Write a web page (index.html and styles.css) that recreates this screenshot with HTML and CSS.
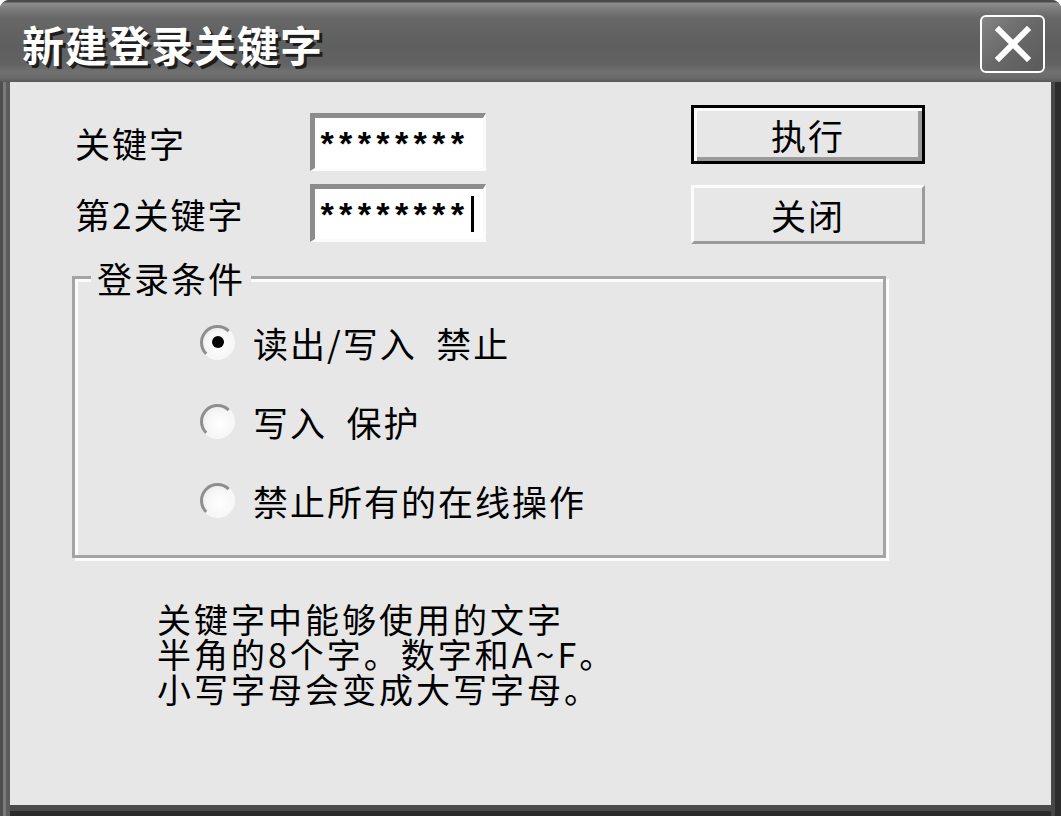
FILE: index.html
```html
<!DOCTYPE html>
<html lang="zh-CN">
<head>
<meta charset="utf-8">
<title>新建登录关键字</title>
<link rel="stylesheet" href="styles.css">
</head>
<body>
<div class="window">
  <div class="titlebar">
    <span class="title">新建登录关键字</span>
    <div class="close" aria-label="关闭">
      <svg width="36" height="36" viewBox="0 0 36 36">
        <path d="M4 4 L32 32 M32 4 L4 32" stroke="#ffffff" stroke-width="6" stroke-linecap="square" fill="none"/>
      </svg>
    </div>
  </div>
  <div class="frame">
    <div class="client">
      <div class="top">
        <div class="fields">
          <div class="field-row">
            <span class="label">关键字</span>
            <div class="input">********</div>
          </div>
          <div class="field-row">
            <span class="label">第2关键字</span>
            <div class="input">********<span class="caret"></span></div>
          </div>
        </div>
        <div class="buttons">
          <div class="btn btn-default">执行</div>
          <div class="btn">关闭</div>
        </div>
      </div>
      <fieldset class="group">
        <legend class="group-title">登录条件</legend>
        <div class="options">
          <div class="option"><span class="radio checked"></span><span class="option-text">读出/写入&ensp;禁止</span></div>
          <div class="option"><span class="radio"></span><span class="option-text">写入&ensp;保护</span></div>
          <div class="option"><span class="radio"></span><span class="option-text">禁止所有的在线操作</span></div>
        </div>
      </fieldset>
      <div class="info">
        <div class="info-line">关键字中能够使用的文字</div>
        <div class="info-line">半角的8个字。数字和A~F。</div>
        <div class="info-line">小写字母会变成大写字母。</div>
      </div>
    </div>
  </div>
</div>
</body>
</html>
```

FILE: styles.css
```css
* { box-sizing: border-box; }

html, body {
  margin: 0;
  padding: 0;
  background: #ffffff;
}

body {
  font-family: "Noto Sans CJK SC", "Noto Sans", sans-serif;
  color: #000;
}

.window {
  width: 1061px;
  height: 816px;
  display: flex;
  flex-direction: column;
  border-radius: 9px 9px 0 0;
  overflow: hidden;
  background: #4c4c4c;
}

.titlebar {
  height: 82px;
  flex: none;
  display: flex;
  align-items: center;
  justify-content: space-between;
  padding: 6px 16px 0 22px;
  background: linear-gradient(to bottom,
    #4a4a4a 0px, #4a4a4a 2px,
    #8e8e8e 3px, #7c7c7c 9px,
    #676767 18px, #5f5f5f 45px,
    #626262 64px, #717171 72px,
    #6a6a6a 78px, #585858 82px);
}

.title {
  color: #ffffff;
  font-size: 42px;
  font-weight: 700;
  letter-spacing: 1px;
  line-height: 48px;
  text-shadow: 3px 3px 0 #1e1e1e;
}

.close {
  width: 65px;
  height: 58px;
  border: 2px solid #ffffff;
  border-radius: 6px;
  background: linear-gradient(135deg, #858585 0%, #6a6a6a 45%, #5a5a5a 100%);
  display: flex;
  align-items: center;
  justify-content: center;
}

.frame {
  flex: 1;
  display: flex;
  padding: 0 10px 11px 10px;
  background:
    linear-gradient(to right, #4e4e4e 0 3px, #7a7a7a 3px 6px, #5c5c5c 6px 10px, transparent 10px),
    linear-gradient(to left, #2c2c2c 0 6px, #474747 6px 10px, transparent 10px),
    linear-gradient(to top, #2a2a2a 0 5px, #4a4a4a 5px 11px, transparent 11px);
}

.client {
  flex: 1;
  background: #e7e7e7;
  padding: 23px 0 0 0;
  font-size: 35px;
  letter-spacing: 2px;
  line-height: 37px;
}

.top {
  display: flex;
  align-items: flex-start;
  padding-left: 65px;
}

.fields {
  margin-top: 8px;
  display: flex;
  flex-direction: column;
  gap: 13px;
}

.field-row {
  display: flex;
  align-items: center;
}

.label {
  width: 235px;
}

.input {
  width: 176px;
  height: 58px;
  background: #ffffff;
  border-style: solid;
  border-width: 5px 3px 3px 5px;
  border-color: #8c8c8c #fbfbfb #fbfbfb #8c8c8c;
  padding: 8px 0 0 2px;
  display: flex;
  align-items: center;
  font-family: "Liberation Mono", "DejaVu Sans Mono", monospace;
  font-size: 34px;
  font-weight: 700;
  line-height: 34px;
  letter-spacing: -1.8px;
}

.caret {
  display: inline-block;
  width: 3px;
  height: 36px;
  background: #000;
  margin-left: 5px;
  margin-top: -8px;
}

.buttons {
  margin-left: 205px;
  display: flex;
  flex-direction: column;
  gap: 21px;
}

.btn {
  width: 234px;
  height: 59px;
  display: flex;
  align-items: center;
  justify-content: center;
  background: #e7e7e7;
  border-style: solid;
  border-width: 3px;
  border-color: #fbfbfb #9a9a9a #9a9a9a #fbfbfb;
}

.btn-default {
  border: 3px solid #000;
  box-shadow: inset 3px 3px 0 #fbfbfb, inset -4px -4px 0 #9a9a9a;
}

.group {
  margin: 15px 0 0 62px;
  width: 814px;
  padding: 0;
  border: 3px solid #a4a4a4;
  box-shadow: inset 3px 3px 0 #fbfbfb, 3px 3px 0 #fbfbfb;
  min-inline-size: 0;
}

.group-title {
  margin-left: 16px;
  padding: 0 6px;
  background: #e7e7e7;
  line-height: 37px;
}

.options {
  padding: 26px 0 35px 125px;
  display: flex;
  flex-direction: column;
  gap: 39px;
}

.option {
  height: 40px;
  display: flex;
  align-items: center;
}

.radio {
  position: relative;
  width: 35px;
  height: 35px;
  border-radius: 50%;
  border: 3px solid;
  border-color: #8e8e8e #f7f7f7 #f7f7f7 #8e8e8e;
  background: radial-gradient(circle at 60% 60%, #ffffff 0%, #f6f6f6 55%, #e2e2e2 100%);
  margin-right: 18px;
  flex: none;
}

.radio.checked::after {
  content: "";
  position: absolute;
  left: 50%;
  top: 50%;
  width: 12px;
  height: 12px;
  margin: -6px 0 0 -6px;
  border-radius: 50%;
  background: #000;
}

.info {
  margin: 43px 0 0 147px;
  font-size: 34px;
  letter-spacing: 3px;
}

.info-line {
  height: 35px;
  line-height: 35px;
}
```
